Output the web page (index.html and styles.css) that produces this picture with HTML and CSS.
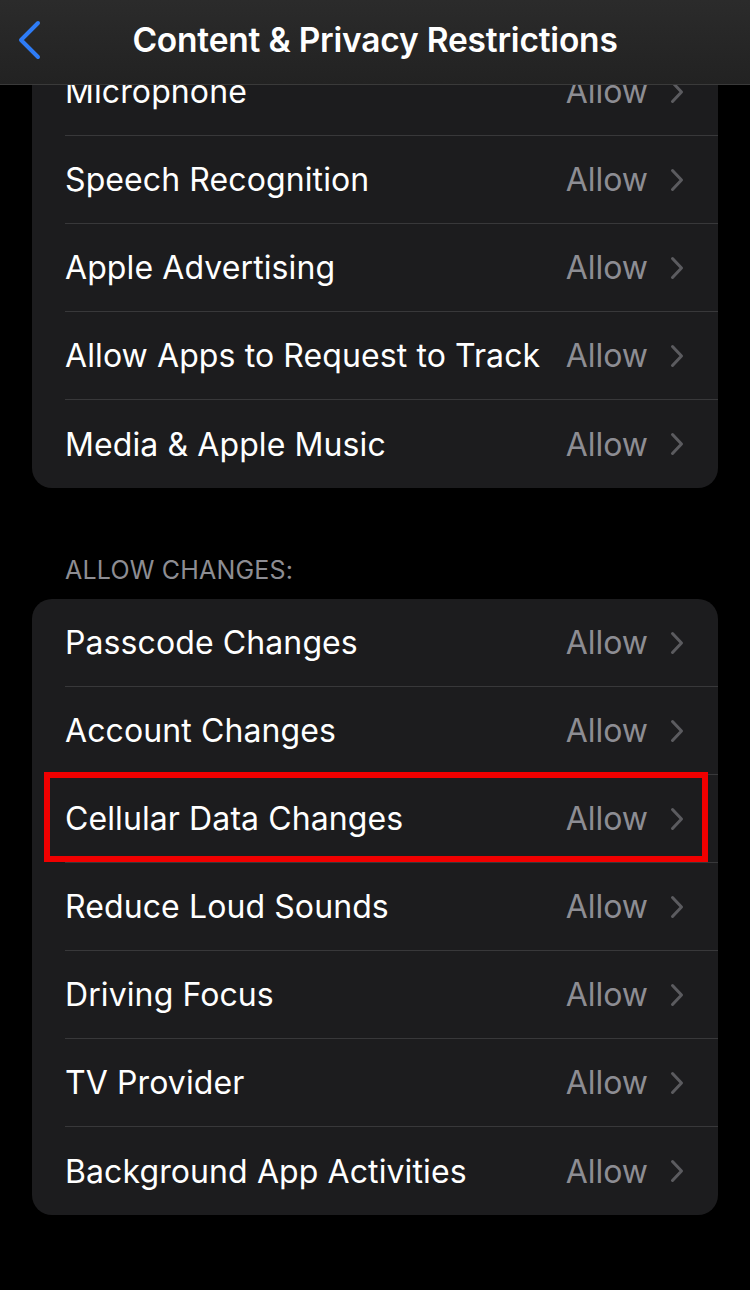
FILE: index.html
```html
<!DOCTYPE html>
<html>
<head>
<meta charset="utf-8">
<link rel="stylesheet" href="styles.css">
</head>
<body>
<header class="navbar">
  <svg class="back" width="28" height="42" viewBox="0 0 28 42"><path d="M22 4 L5 21 L22 38" fill="none" stroke="#2e7cf6" stroke-width="4" stroke-linecap="round" stroke-linejoin="round"/></svg>
  <h1 class="title">Content &amp; Privacy Restrictions</h1>
</header>
<main class="content">
  <section class="card first">
    <div class="row"><div class="row-inner"><span class="label">Microphone</span><span class="value">Allow</span><svg class="chev" width="14" height="24" viewBox="0 0 14 24"><path d="M2.5 2.5 L11.5 12 L2.5 21.5" fill="none" stroke="#5b5b5f" stroke-width="3" stroke-linecap="round" stroke-linejoin="round"/></svg></div></div>
    <div class="row"><div class="row-inner"><span class="label">Speech Recognition</span><span class="value">Allow</span><svg class="chev" width="14" height="24" viewBox="0 0 14 24"><path d="M2.5 2.5 L11.5 12 L2.5 21.5" fill="none" stroke="#5b5b5f" stroke-width="3" stroke-linecap="round" stroke-linejoin="round"/></svg></div></div>
    <div class="row"><div class="row-inner"><span class="label">Apple Advertising</span><span class="value">Allow</span><svg class="chev" width="14" height="24" viewBox="0 0 14 24"><path d="M2.5 2.5 L11.5 12 L2.5 21.5" fill="none" stroke="#5b5b5f" stroke-width="3" stroke-linecap="round" stroke-linejoin="round"/></svg></div></div>
    <div class="row"><div class="row-inner"><span class="label">Allow Apps to Request to Track</span><span class="value">Allow</span><svg class="chev" width="14" height="24" viewBox="0 0 14 24"><path d="M2.5 2.5 L11.5 12 L2.5 21.5" fill="none" stroke="#5b5b5f" stroke-width="3" stroke-linecap="round" stroke-linejoin="round"/></svg></div></div>
    <div class="row"><div class="row-inner"><span class="label">Media &amp; Apple Music</span><span class="value">Allow</span><svg class="chev" width="14" height="24" viewBox="0 0 14 24"><path d="M2.5 2.5 L11.5 12 L2.5 21.5" fill="none" stroke="#5b5b5f" stroke-width="3" stroke-linecap="round" stroke-linejoin="round"/></svg></div></div>
  </section>
  <div class="section-header">ALLOW CHANGES:</div>
  <section class="card">
    <div class="row"><div class="row-inner"><span class="label">Passcode Changes</span><span class="value">Allow</span><svg class="chev" width="14" height="24" viewBox="0 0 14 24"><path d="M2.5 2.5 L11.5 12 L2.5 21.5" fill="none" stroke="#5b5b5f" stroke-width="3" stroke-linecap="round" stroke-linejoin="round"/></svg></div></div>
    <div class="row"><div class="row-inner"><span class="label">Account Changes</span><span class="value">Allow</span><svg class="chev" width="14" height="24" viewBox="0 0 14 24"><path d="M2.5 2.5 L11.5 12 L2.5 21.5" fill="none" stroke="#5b5b5f" stroke-width="3" stroke-linecap="round" stroke-linejoin="round"/></svg></div></div>
    <div class="row highlighted"><div class="row-inner"><span class="label">Cellular Data Changes</span><span class="value">Allow</span><svg class="chev" width="14" height="24" viewBox="0 0 14 24"><path d="M2.5 2.5 L11.5 12 L2.5 21.5" fill="none" stroke="#5b5b5f" stroke-width="3" stroke-linecap="round" stroke-linejoin="round"/></svg></div><div class="highlight-box"></div></div>
    <div class="row"><div class="row-inner"><span class="label">Reduce Loud Sounds</span><span class="value">Allow</span><svg class="chev" width="14" height="24" viewBox="0 0 14 24"><path d="M2.5 2.5 L11.5 12 L2.5 21.5" fill="none" stroke="#5b5b5f" stroke-width="3" stroke-linecap="round" stroke-linejoin="round"/></svg></div></div>
    <div class="row"><div class="row-inner"><span class="label">Driving Focus</span><span class="value">Allow</span><svg class="chev" width="14" height="24" viewBox="0 0 14 24"><path d="M2.5 2.5 L11.5 12 L2.5 21.5" fill="none" stroke="#5b5b5f" stroke-width="3" stroke-linecap="round" stroke-linejoin="round"/></svg></div></div>
    <div class="row"><div class="row-inner"><span class="label">TV Provider</span><span class="value">Allow</span><svg class="chev" width="14" height="24" viewBox="0 0 14 24"><path d="M2.5 2.5 L11.5 12 L2.5 21.5" fill="none" stroke="#5b5b5f" stroke-width="3" stroke-linecap="round" stroke-linejoin="round"/></svg></div></div>
    <div class="row"><div class="row-inner"><span class="label">Background App Activities</span><span class="value">Allow</span><svg class="chev" width="14" height="24" viewBox="0 0 14 24"><path d="M2.5 2.5 L11.5 12 L2.5 21.5" fill="none" stroke="#5b5b5f" stroke-width="3" stroke-linecap="round" stroke-linejoin="round"/></svg></div></div>
  </section>
</main>
</body>
</html>
```
FILE: styles.css
```css
* { box-sizing: border-box; }
html, body {
  margin: 0;
  padding: 0;
  background: #000;
  width: 750px;
  height: 1290px;
  overflow: hidden;
  font-family: Inter, "Liberation Sans", sans-serif;
  color: #fff;
}
.navbar {
  position: absolute;
  top: 0;
  left: 0;
  width: 750px;
  height: 85px;
  background: linear-gradient(180deg, #2b2b2b 0%, #222 100%);
  border-bottom: 1px solid #3a3a3a;
  display: flex;
  align-items: center;
  justify-content: center;
  z-index: 2;
}
.back {
  position: absolute;
  left: 16px;
  top: 19px;
}
.title {
  margin: 0;
  font-size: 33.5px;
  font-weight: 600;
  letter-spacing: -0.2px;
  color: #fff;
  margin-top: -4px;
}
.content {
  padding: 48px 32px 0 32px;
  display: flex;
  flex-direction: column;
}
.card {
  background: #1c1c1e;
  border-radius: 20px;
  overflow: hidden;
}
.row {
  position: relative;
  height: 88px;
  padding-left: 33px;
}
.row-inner {
  height: 100%;
  display: flex;
  align-items: center;
  padding-right: 34px;
  border-bottom: 1px solid #38383a;
}
.row:last-child .row-inner { border-bottom: none; }
.label {
  flex: 1;
  font-size: 32px;
  letter-spacing: 0.1px;
  color: #fff;
}
.value {
  font-size: 32px;
  color: #8d8d93;
  margin-right: 22px;
}
.chev {
  display: block;
  flex: none;
}
.section-header {
  margin: 67px 0 14px 33px;
  font-size: 25px;
  color: #8d8d93;
  letter-spacing: 0.2px;
}
.highlight-box {
  position: absolute;
  left: 12px;
  top: -3px;
  width: 664px;
  height: 90px;
  border: 6px solid #f00000;
  pointer-events: none;
}
```
